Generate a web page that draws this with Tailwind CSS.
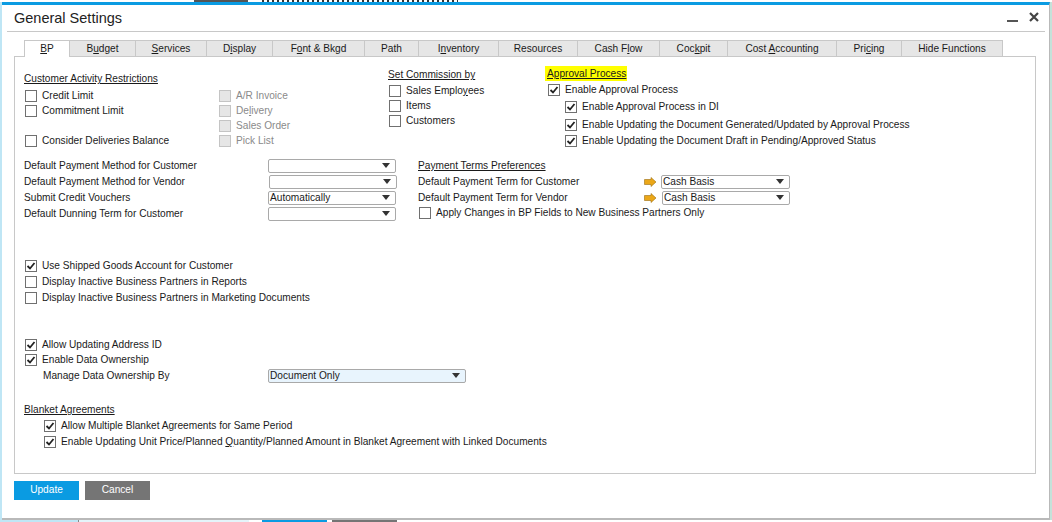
<!DOCTYPE html>
<html lang="en">
<head>
  <meta charset="UTF-8" />
  <title>General Settings</title>
  <script src="https://cdn.jsdelivr.net/npm/@tailwindcss/browser@4"></script>
</head>
<body class="w-[1052px] h-[522px] overflow-hidden bg-white font-['Liberation_Sans',sans-serif] text-[10.15px] leading-[15px] text-[#1a1a1a]">

  <!-- what shows behind the dialog, top edge -->
  <div class="h-[2px] flex">
    <div class="w-[194px] h-[2px]"></div>
    <div class="w-[54px] h-[2px] bg-[#555]"></div>
    <div class="w-[14px] h-[2px]"></div>
    <div class="w-[196px] h-[2px] bg-[repeating-linear-gradient(90deg,#333_0,#333_2px,#fff_2px,#fff_5px)]"></div>
  </div>

  <div class="flex h-[518px]">
    <div class="w-[2px] bg-[#bfe6f5]"></div>

    <!-- window -->
    <div class="w-[1048px] h-[518px] bg-white border-t-[3px] border-t-[#0a9be2] border-r border-b-2 border-r-[#b9b9b9] border-b-[#b9b9b9] pl-[5px] pr-[4px]">

      <div class="h-[26px] flex items-center justify-between border-b border-[#c8c8c8] pl-[7px] pr-[6px] box-content">
        <div class="text-[14.5px] text-[#222]">General Settings</div>
        <div class="flex items-center gap-[11px] pb-[2px]">
          <div class="w-[11px] h-[2px] bg-[#555] mt-[8px]"></div>
          <svg width="10" height="10" viewBox="0 0 10 10"><path d="M1 1L9 9M9 1L1 9" stroke="#444" stroke-width="2.2" /></svg>
        </div>
      </div>

      <!-- tabs -->
      <div class="flex ml-[17px] mt-[8px] h-[17px] relative z-10 text-center leading-[15px]">
        <div class="w-[46px] h-[17px] bg-white border border-b-0 border-[#c8c8c8]"><span class="underline">B</span>P</div>
        <div class="w-[66px] h-[16px] bg-[#e6e6e6] border-t border-r border-[#c8c8c8]">B<span class="underline">u</span>dget</div>
        <div class="w-[71px] h-[16px] bg-[#e6e6e6] border-t border-r border-[#c8c8c8]"><span class="underline">S</span>ervices</div>
        <div class="w-[66px] h-[16px] bg-[#e6e6e6] border-t border-r border-[#c8c8c8]">D<span class="underline">i</span>splay</div>
        <div class="w-[92px] h-[16px] bg-[#e6e6e6] border-t border-r border-[#c8c8c8]">F<span class="underline">o</span>nt &amp; Bkgd</div>
        <div class="w-[54px] h-[16px] bg-[#e6e6e6] border-t border-r border-[#c8c8c8]">Path</div>
        <div class="w-[80px] h-[16px] bg-[#e6e6e6] border-t border-r border-[#c8c8c8]">I<span class="underline">n</span>ventory</div>
        <div class="w-[79px] h-[16px] bg-[#e6e6e6] border-t border-r border-[#c8c8c8]">Resources</div>
        <div class="w-[82px] h-[16px] bg-[#e6e6e6] border-t border-r border-[#c8c8c8]">Cash F<span class="underline">l</span>ow</div>
        <div class="w-[68px] h-[16px] bg-[#e6e6e6] border-t border-r border-[#c8c8c8]">Coc<span class="underline">k</span>pit</div>
        <div class="w-[109px] h-[16px] bg-[#e6e6e6] border-t border-r border-[#c8c8c8]">Cost <span class="underline">A</span>ccounting</div>
        <div class="w-[65px] h-[16px] bg-[#e6e6e6] border-t border-r border-[#c8c8c8]">Pri<span class="underline">c</span>ing</div>
        <div class="w-[101px] h-[16px] bg-[#e6e6e6] border-t border-r border-[#c8c8c8]">Hide Functions</div>
      </div>

      <!-- panel -->
      <div class="ml-[7px] -mt-px w-[1022px] h-[418px] border border-[#c8c8c8] pl-[9px] pt-[13px]">

        <!-- first block -->
        <div class="flex h-[82px]">
          <div class="w-[194px] pt-[1px]">
            <div class="underline">Customer Activity Restrictions</div>
            <div class="mt-[2px] flex flex-col">
              <div class="h-[15px] flex items-center gap-[5px]"><span class="w-[12px] h-[12px] ml-[1px] border border-[#707070] bg-white"></span>Credit Limit</div>
              <div class="h-[15px] flex items-center gap-[5px]"><span class="w-[12px] h-[12px] ml-[1px] border border-[#707070] bg-white"></span>Commitment Limit</div>
              <div class="h-[15px]"></div>
              <div class="h-[15px] flex items-center gap-[5px]"><span class="w-[12px] h-[12px] ml-[1px] border border-[#707070] bg-white"></span>Consider Deliveries Balance</div>
            </div>
          </div>
          <div class="w-[170px] pt-[18px] text-[#8a8a8a]">
            <div class="h-[15px] flex items-center gap-[5px]"><span class="w-[12px] h-[12px] ml-[1px] border border-[#c4c4c4] bg-[#e6e6e6]"></span>A/R Invoice</div>
            <div class="h-[15px] flex items-center gap-[5px]"><span class="w-[12px] h-[12px] ml-[1px] border border-[#c4c4c4] bg-[#e6e6e6]"></span><span>De<span class="underline">l</span>ivery</span></div>
            <div class="h-[15px] flex items-center gap-[5px]"><span class="w-[12px] h-[12px] ml-[1px] border border-[#c4c4c4] bg-[#e6e6e6]"></span>Sales Order</div>
            <div class="h-[15px] flex items-center gap-[5px]"><span class="w-[12px] h-[12px] ml-[1px] border border-[#c4c4c4] bg-[#e6e6e6]"></span>Pick List</div>
          </div>
          <div class="w-[159px] -mt-[3px]">
            <div class="underline">Set Commission by</div>
            <div class="mt-[1px]">
              <div class="h-[15px] flex items-center gap-[5px]"><span class="w-[12px] h-[12px] ml-[1px] border border-[#707070] bg-white"></span><span>Sales Emplo<span class="underline">y</span>ees</span></div>
              <div class="h-[15px] flex items-center gap-[5px]"><span class="w-[12px] h-[12px] ml-[1px] border border-[#707070] bg-white"></span>Items</div>
              <div class="h-[15px] flex items-center gap-[5px]"><span class="w-[12px] h-[12px] ml-[1px] border border-[#707070] bg-white"></span>Customers</div>
            </div>
          </div>
          <div class="-mt-[4px]">
            <div class="w-[82px] h-[15px] -ml-[2px] pl-[2px] bg-[#ffff00] underline whitespace-nowrap">Approval Process</div>
            <div class="h-[15px] mt-[1px] flex items-center gap-[5px]">
              <span class="w-[12px] h-[12px] ml-[1px] border border-[#707070] bg-white flex items-center justify-center"><svg width="10" height="10" viewBox="0 0 10 10"><path d="M1.5 5L4 7.5L8.5 2" fill="none" stroke="#222" stroke-width="1.8" /></svg></span>Enable Approval Process
            </div>
            <div class="h-[15px] mt-[2px] ml-[16px] flex items-center gap-[5px]">
              <span class="w-[12px] h-[12px] ml-[2px] border border-[#707070] bg-white flex items-center justify-center"><svg width="10" height="10" viewBox="0 0 10 10"><path d="M1.5 5L4 7.5L8.5 2" fill="none" stroke="#222" stroke-width="1.8" /></svg></span>Enable Approval Process in DI
            </div>
            <div class="h-[15px] mt-[3px] ml-[16px] flex items-center gap-[5px]">
              <span class="w-[12px] h-[12px] ml-[2px] border border-[#707070] bg-white flex items-center justify-center"><svg width="10" height="10" viewBox="0 0 10 10"><path d="M1.5 5L4 7.5L8.5 2" fill="none" stroke="#222" stroke-width="1.8" /></svg></span>Enable Updating the Document Generated/Updated by Approval Process
            </div>
            <div class="h-[15px] mt-[1px] ml-[16px] flex items-center gap-[5px]">
              <span class="w-[12px] h-[12px] ml-[2px] border border-[#707070] bg-white flex items-center justify-center"><svg width="10" height="10" viewBox="0 0 10 10"><path d="M1.5 5L4 7.5L8.5 2" fill="none" stroke="#222" stroke-width="1.8" /></svg></span>Enable Updating the Document Draft in Pending/Approved Status
            </div>
          </div>
        </div>

        <!-- second block -->
        <div class="flex mt-[6px] h-[63px]">
          <div class="w-[394px] flex flex-col gap-[1px]">
            <div class="h-[15px] flex items-center"><span class="w-[244px]">Default Payment Method for Customer</span><span class="w-[128px] h-[14px] border border-[#a9a9a9] rounded-[2px] flex items-center justify-end pr-[5px]"><span class="w-0 h-0 border-x-[4px] border-x-transparent border-t-[5px] border-t-[#333]"></span></span></div>
            <div class="h-[15px] flex items-center"><span class="w-[245px]">Default Payment Method for Vendor</span><span class="w-[128px] h-[14px] border border-[#a9a9a9] rounded-[2px] flex items-center justify-end pr-[5px]"><span class="w-0 h-0 border-x-[4px] border-x-transparent border-t-[5px] border-t-[#333]"></span></span></div>
            <div class="h-[15px] flex items-center"><span class="w-[244px]">Submit Credit Vouchers</span><span class="w-[128px] h-[14px] border border-[#a9a9a9] rounded-[2px] flex items-center justify-between pl-[1px] pr-[5px]">Automatically<span class="w-0 h-0 border-x-[4px] border-x-transparent border-t-[5px] border-t-[#333]"></span></span></div>
            <div class="h-[15px] flex items-center"><span class="w-[244px]">Default Dunning Term for Customer</span><span class="w-[128px] h-[14px] border border-[#a9a9a9] rounded-[2px] flex items-center justify-end pr-[5px]"><span class="w-0 h-0 border-x-[4px] border-x-transparent border-t-[5px] border-t-[#333]"></span></span></div>
          </div>
          <div class="flex flex-col gap-[1px]">
            <div class="h-[15px] underline">Payment Terms Preferences</div>
            <div class="h-[15px] flex items-center"><span class="w-[226px]">Default Payment Term for Customer</span><svg class="mr-[4px]" width="13" height="10" viewBox="0 0 13 10"><path d="M0.5 2.5H7V0.5L12 5L7 9.5V7.5H0.5Z" fill="#eba718" stroke="#9a6d10" stroke-width="0.6" /></svg><span class="w-[129px] h-[14px] border border-[#a9a9a9] rounded-[2px] flex items-center justify-between pl-[1px] pr-[5px]">Cash Basis<span class="w-0 h-0 border-x-[4px] border-x-transparent border-t-[5px] border-t-[#333]"></span></span></div>
            <div class="h-[15px] flex items-center"><span class="w-[226px]">Default Payment Term for Vendor</span><svg class="mr-[5px]" width="13" height="10" viewBox="0 0 13 10"><path d="M0.5 2.5H7V0.5L12 5L7 9.5V7.5H0.5Z" fill="#eba718" stroke="#9a6d10" stroke-width="0.6" /></svg><span class="w-[128px] h-[14px] border border-[#a9a9a9] rounded-[2px] flex items-center justify-between pl-[1px] pr-[5px]">Cash Basis<span class="w-0 h-0 border-x-[4px] border-x-transparent border-t-[5px] border-t-[#333]"></span></span></div>
            <div class="h-[15px] -mt-[1px] flex items-center gap-[5px]"><span class="w-[12px] h-[12px] ml-[1px] border border-[#707070] bg-white"></span>Apply Changes in BP Fields to New Business Partners Only</div>
          </div>
        </div>

        <!-- third block -->
        <div class="mt-[37px]">
          <div class="h-[15px] flex items-center gap-[5px]"><span class="w-[12px] h-[12px] ml-[1px] border border-[#707070] bg-white flex items-center justify-center"><svg width="10" height="10" viewBox="0 0 10 10"><path d="M1.5 5L4 7.5L8.5 2" fill="none" stroke="#222" stroke-width="1.8" /></svg></span>Use Shipped Goods Account for Customer</div>
          <div class="h-[15px] mt-[1px] flex items-center gap-[5px]"><span class="w-[12px] h-[12px] ml-[1px] border border-[#707070] bg-white"></span>Display Inactive Business Partners in Reports</div>
          <div class="h-[15px] mt-[1px] flex items-center gap-[5px]"><span class="w-[12px] h-[12px] ml-[1px] border border-[#707070] bg-white"></span>Display Inactive Business Partners in Marketing Documents</div>
        </div>

        <!-- fourth block -->
        <div class="mt-[32px]">
          <div class="h-[15px] flex items-center gap-[5px]"><span class="w-[12px] h-[12px] ml-[1px] border border-[#707070] bg-white flex items-center justify-center"><svg width="10" height="10" viewBox="0 0 10 10"><path d="M1.5 5L4 7.5L8.5 2" fill="none" stroke="#222" stroke-width="1.8" /></svg></span>Allow Updating Address ID</div>
          <div class="h-[15px] flex items-center gap-[5px]"><span class="w-[12px] h-[12px] ml-[1px] border border-[#707070] bg-white flex items-center justify-center"><svg width="10" height="10" viewBox="0 0 10 10"><path d="M1.5 5L4 7.5L8.5 2" fill="none" stroke="#222" stroke-width="1.8" /></svg></span>Enable Data Ownership</div>
          <div class="h-[15px] mt-[1px] flex items-center"><span class="w-[244px] pl-[19px]">Manage Data Ownership By</span><span class="w-[198px] h-[14px] bg-[#e8f4fd] border border-[#a9a9a9] rounded-[2px] flex items-center justify-between pl-[1px] pr-[5px]">Document Only<span class="w-0 h-0 border-x-[4px] border-x-transparent border-t-[5px] border-t-[#333]"></span></span></div>
        </div>

        <!-- blanket agreements -->
        <div class="mt-[19px]">
          <div class="h-[15px] underline">Blanket Agreements</div>
          <div class="h-[15px] mt-[1px] ml-[19px] flex items-center gap-[5px]"><span class="w-[12px] h-[12px] ml-[1px] border border-[#707070] bg-white flex items-center justify-center"><svg width="10" height="10" viewBox="0 0 10 10"><path d="M1.5 5L4 7.5L8.5 2" fill="none" stroke="#222" stroke-width="1.8" /></svg></span>Allow Multiple Blanket Agreements for Same Period</div>
          <div class="h-[15px] mt-[1px] ml-[19px] flex items-center gap-[5px]"><span class="w-[12px] h-[12px] ml-[1px] border border-[#707070] bg-white flex items-center justify-center"><svg width="10" height="10" viewBox="0 0 10 10"><path d="M1.5 5L4 7.5L8.5 2" fill="none" stroke="#222" stroke-width="1.8" /></svg></span><span>Enable Updating Unit Price/Planned <span class="underline">Q</span>uantity/Planned Amount in Blanket Agreement with Linked Documents</span></div>
        </div>
      </div>

      <!-- buttons -->
      <div class="flex gap-[6px] ml-[7px] mt-[7px]">
        <div class="w-[65px] h-[19px] bg-[#0a9be2] text-white text-center leading-[18px]">Update</div>
        <div class="w-[65px] h-[19px] bg-[#757575] text-white text-center leading-[18px]">Cancel</div>
      </div>
    </div>

    <div class="w-[2px] bg-[#c4e2da]"></div>
  </div>

  <!-- what shows behind the dialog, bottom edge -->
  <div class="h-[2px] flex">
    <div class="w-[78px] h-[2px] bg-[#bfe6f5]"></div>
    <div class="w-[1px] h-[2px] bg-[#888]"></div>
    <div class="w-[170px] h-[2px] bg-[#e4f4fa]"></div>
    <div class="w-[13px] h-[2px]"></div>
    <div class="w-[65px] h-[2px] bg-[#0a9be2]"></div>
    <div class="w-[5px] h-[2px]"></div>
    <div class="w-[65px] h-[2px] bg-[#757575]"></div>
  </div>
</body>
</html>
